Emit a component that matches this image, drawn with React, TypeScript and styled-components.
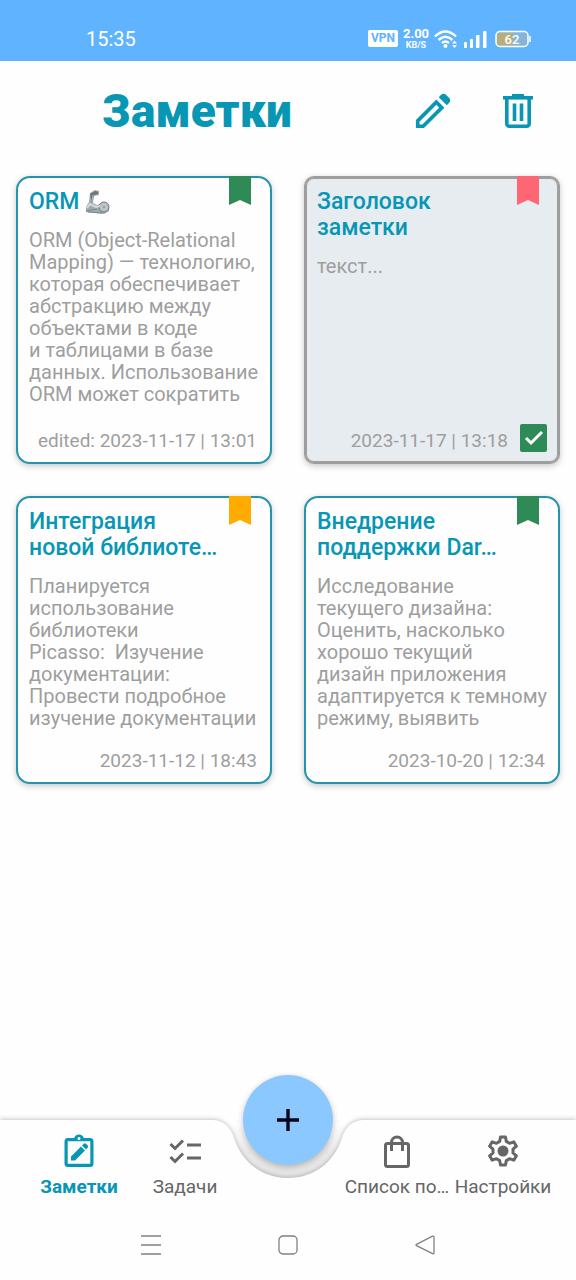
import React from 'react';
import styled, { createGlobalStyle } from 'styled-components';

const teal = '#0796b4';
const grey = '#9e9e9e';
const green = '#2e8b57';

const GlobalStyle = createGlobalStyle`
  * { box-sizing: border-box; }
  body {
    margin: 0;
    background: #fefefe;
    font-family: Roboto, "Liberation Sans", sans-serif;
  }
  button { padding: 0; border: 0; background: none; font: inherit; cursor: pointer; }
  svg { display: block; }
`;

const Screen = styled.div`
  min-height: 100vh;
  display: flex;
  flex-direction: column;
`;

const StatusBar = styled.div`
  display: flex;
  align-items: center;
  justify-content: space-between;
  height: 61px;
  padding: 16px 45px 0 86px;
  background: #60b3ff;
  color: #fff;
`;

const Clock = styled.time`
  font-size: 20px;
  line-height: 24px;
`;

const StatusIcons = styled.div`
  display: flex;
  align-items: center;
  gap: 4px;
`;

const VpnBadge = styled.span`
  width: 30px;
  border-radius: 2px;
  background: #fff;
  color: #60b3ff;
  font-size: 12px;
  font-weight: 700;
  line-height: 17px;
  text-align: center;
`;

const Speed = styled.span`
  display: flex;
  flex-direction: column;
  align-items: center;
  width: 28px;
  font-size: 13px;
  font-weight: 700;
  line-height: 13px;
`;

const SpeedUnit = styled.span`
  font-size: 9px;
  line-height: 11px;
`;

const Header = styled.header`
  display: flex;
  align-items: center;
  padding: 0 40px 0 102px;
  height: 100px;
  color: ${teal};
`;

const PageTitle = styled.h1`
  flex: 1;
  margin: 0;
  font-size: 46px;
  font-weight: 900;
  line-height: 48px;
`;

const HeaderActions = styled.div`
  display: flex;
  align-items: center;
  gap: 48px;
`;

const HeaderButton = styled.button`
  color: ${teal};
`;

const Notes = styled.main`
  flex: 1;
  display: grid;
  grid-template-columns: repeat(2, minmax(0, 1fr));
  align-content: start;
  gap: 32px;
  padding: 15px 16px 32px;
`;

const Card = styled.article<{ $selected?: boolean }>`
  position: relative;
  display: flex;
  flex-direction: column;
  height: 288px;
  padding: 11px 11px 10px;
  border: 2px solid ${(p) => (p.$selected ? grey : '#2593ac')};
  border-radius: ${(p) => (p.$selected ? 10 : 14)}px;
  background: ${(p) => (p.$selected ? '#e7ecf0' : '#fefefe')};
  box-shadow: ${(p) => (p.$selected ? `inset 0 0 0 1px ${grey}, ` : '')}0 2px 6px rgba(0, 0, 0, 0.22);
`;

const CardTitle = styled.h2`
  display: flex;
  gap: 5px;
  margin: 0 0 14px;
  color: ${teal};
  font-size: 23px;
  font-weight: 500;
  line-height: 26px;
  white-space: pre-line;
`;

const CardText = styled.p`
  flex: 1;
  margin: 0;
  color: ${grey};
  font-size: 20px;
  line-height: 22px;
  white-space: pre;
`;

const CardFooter = styled.footer`
  display: flex;
  align-items: flex-end;
  justify-content: flex-end;
  gap: 12px;
  height: 28px;
  padding-right: 2px;
  color: ${grey};
  font-size: 19px;
  line-height: 22px;
  white-space: nowrap;
`;

const Ribbon = styled.span<{ $color: string }>`
  position: absolute;
  top: -2px;
  right: 19px;
  width: 22px;
  height: 29px;
  background: ${(p) => p.$color};
  clip-path: polygon(0 0, 100% 0, 100% 100%, 50% 83%, 0 100%);
`;

const CheckLabel = styled.label`
  position: relative;
  width: 27px;
  height: 28px;
  margin-right: -2px;
  svg { position: absolute; inset: 0; pointer-events: none; }
`;

const CheckInput = styled.input`
  appearance: none;
  display: block;
  width: 27px;
  height: 28px;
  margin: 0;
  border-radius: 2px;
  background: ${green};
`;

const BottomBar = styled.nav`
  position: relative;
  padding: 0 20px 0 26px;
  height: 90px;
`;

const BarSurface = styled.div`
  position: absolute;
  inset: 0;
  display: flex;
  filter: drop-shadow(0 -1px 2px rgba(0, 0, 0, 0.22));
`;

const BarSide = styled.div`
  flex: 1;
  background: #fefefe;
`;

const CradleShade = styled.svg`
  position: absolute;
  top: 0;
  left: calc(50% - 80px);
`;

const Tabs = styled.div`
  position: relative;
  display: grid;
  grid-template-columns: repeat(5, minmax(0, 1fr));
`;

const Tab = styled.button<{ $active?: boolean }>`
  display: flex;
  flex-direction: column;
  align-items: center;
  gap: 8px;
  padding-top: 14px;
  color: ${(p) => (p.$active ? teal : '#666')};
  font-size: 19px;
  font-weight: ${(p) => (p.$active ? 700 : 400)};
  line-height: 22px;
  white-space: nowrap;
`;

const AddButton = styled.button`
  position: absolute;
  top: -45px;
  left: calc(50% - 45px);
  display: grid;
  place-items: center;
  width: 90px;
  height: 90px;
  border-radius: 50%;
  background: #8ac8ff;
  box-shadow: 0 2px 6px rgba(0, 0, 0, 0.24);
`;

const SystemBar = styled.div`
  position: relative;
  display: flex;
  justify-content: center;
  align-items: center;
  gap: 117px;
  height: 70px;
  background: #fefefe;
`;

const SystemButton = styled.button`
  display: grid;
  place-items: center;
  width: 20px;
  height: 20px;
  color: #808080;
`;

const MechArm = () => (
  <svg width="27" height="26" viewBox="0 0 27 26" role="img" aria-label="🦾">
    <path d="M2 18 L5 13 L6 4 L11 1 L15 2 L15 6 L10 7 L9 14 L13 16 L20 13 L25 16 L25 22 L20 25 L2 23Z" fill="#9eabb1" />
    <circle cx="20" cy="18" r="5" fill="#b9c3c7" stroke="#72797c" />
    <circle cx="20" cy="18" r="2" fill="#98a3a8" stroke="#c8cfd2" />
    <path d="M6 5 L11 2 L14 3 L14 5 L10 6 L8 14Z" fill="#6f7578" />
    <path d="M8 13 L9 6" stroke="#b4babd" strokeWidth="1" />
    <path d="M3 19 L6 15 L12 18 L16 17" stroke="#d4dadd" strokeWidth="2" fill="none" />
    <path d="M2 22 L13 20 M4 23 L18 24" stroke="#7b878d" fill="none" />
  </svg>
);

const Plus = () => (
  <svg width="24" height="24" viewBox="0 0 24 24" stroke="#05051a" strokeWidth="3.400">
    <path d="M12 1v22M1 12h22" />
  </svg>
);

type Note = {
  title: string;
  text: string;
  date: string;
  ribbon: string;
  arm?: boolean;
  selected?: boolean;
};

const notes: Note[] = [
  {
    title: 'ORM',
    arm: true,
    text: 'ORM (Object-Relational\nMapping) — технологию,\nкоторая обеспечивает\nабстракцию между\nобъектами в коде\nи таблицами в базе\nданных. Использование\nORM может сократить',
    date: 'edited: 2023-11-17 | 13:01',
    ribbon: green,
  },
  {
    title: 'Заголовок\nзаметки',
    text: 'текст...',
    date: '2023-11-17 | 13:18',
    ribbon: '#ff6673',
    selected: true,
  },
  {
    title: 'Интеграция\nновой библиоте…',
    text: 'Планируется\nиспользование\nбиблиотеки\nPicasso:  Изучение\nдокументации:\nПровести подробное\nизучение документации',
    date: '2023-11-12 | 18:43',
    ribbon: '#ffab00',
  },
  {
    title: 'Внедрение\nподдержки Dar…',
    text: 'Исследование\nтекущего дизайна:\nОценить, насколько\nхорошо текущий\nдизайн приложения\nадаптируется к темному\nрежиму, выявить',
    date: '2023-10-20 | 12:34',
    ribbon: green,
  },
];

const NoteCard = ({ note }: { note: Note }) => (
  <Card $selected={note.selected}>
    <Ribbon $color={note.ribbon} />
    <CardTitle>
      {note.title}
      {note.arm && <MechArm />}
    </CardTitle>
    <CardText>{note.text}</CardText>
    <CardFooter>
      <time>{note.date}</time>
      {note.selected && (
        <CheckLabel>
          <CheckInput type="checkbox" defaultChecked aria-label="Выбрать заметку" />
          <svg width="27" height="28" viewBox="0 0 27 28" fill="none" stroke="#fff" strokeWidth="3">
            <path d="M6 14l5 5L22 8" />
          </svg>
        </CheckLabel>
      )}
    </CardFooter>
  </Card>
);

export default function App() {
  return (
    <>
      <GlobalStyle />
      <Screen>
        <StatusBar>
          <Clock>15:35</Clock>
          <StatusIcons>
            <VpnBadge>VPN</VpnBadge>
            <Speed>
              <span>2.00</span>
              <SpeedUnit>KB/S</SpeedUnit>
            </Speed>
            <svg width="25" height="20" viewBox="0 0 25 20" fill="none" stroke="#fff" strokeWidth="2.4">
              <path d="M1 7.500Q11.500-2.500 22 7.500M4.500 11Q11.500 4.500 18.500 11M8 14.200Q11.500 11 15 14.200" />
              <circle cx="11.500" cy="17" r="2" fill="#fff" stroke="none" />
              <path d="M18 14.500l2.500-3 2.500 3zM18 16l2.500 3 2.500-3z" fill="#fff" stroke="none" />
            </svg>
            <svg width="25" height="18" viewBox="0 0 25 18" fill="#fff">
              <rect x="1" y="12" width="3" height="6" rx="1" />
              <rect x="7" y="9" width="3" height="9" rx="1" />
              <rect x="13" y="5" width="3.500" height="13" rx="1" />
              <rect x="20" y="1" width="3.500" height="17" rx="1" />
            </svg>
            <svg width="39" height="18" viewBox="0 0 39 18">
              <rect x="4" y="1.500" width="32" height="15" rx="4" fill="#86b5d8" stroke="#fff" strokeWidth="1.500" />
              <path d="M7 3h14v12H7a2 2 0 0 1-2-2V5a2 2 0 0 1 2-2z" fill="#b9ae78" />
              <path d="M38 6v6" stroke="#fff" strokeWidth="1.500" />
              <text x="20" y="14" fill="#fff" fontSize="13" fontWeight="500" textAnchor="middle">62</text>
            </svg>
          </StatusIcons>
        </StatusBar>

        <Header>
          <PageTitle>Заметки</PageTitle>
          <HeaderActions>
            <HeaderButton aria-label="Редактировать">
              <svg width="38" height="38" viewBox="0 0 40 40" fill="currentColor">
                <path
                  fillRule="evenodd"
                  d="M2 38v-8.500L23.500 8l8.500 8.500L10.500 38zM5.800 34.200h3L26.500 16.500l-3-3L5.800 31.200z"
                />
                <path d="M26 5.500l2.300-2.300a4 4 0 0 1 5.600 0l2.900 2.900a4 4 0 0 1 0 5.600L34.500 14z" />
              </svg>
            </HeaderButton>
            <HeaderButton aria-label="Удалить">
              <svg width="36" height="40" viewBox="0 0 36 40" fill="none" stroke="currentColor">
                <path d="M3 6.800h30" strokeWidth="3.600" />
                <path d="M12 4.500h12" strokeWidth="3" />
                <path d="M6.800 8v24.700a2.500 2.500 0 0 0 2.500 2.500h17.400a2.500 2.500 0 0 0 2.500-2.500V8" strokeWidth="3.600" />
                <path d="M14.500 12.500v17.500M21.500 12.500v17.500" strokeWidth="3.600" />
              </svg>
            </HeaderButton>
          </HeaderActions>
        </Header>

        <Notes>
          {notes.map((note) => (
            <NoteCard key={note.title} note={note} />
          ))}
        </Notes>

        <BottomBar>
          <BarSurface>
            <BarSide />
            <svg width="160" height="90" viewBox="0 0 160 90">
              <path d="M0 0H4C16 0 23 8 26 18C34 43 55 58 80 58S126 43 134 18C137 8 144 0 156 0H160V90H0Z" fill="#fefefe" />
            </svg>
            <BarSide />
          </BarSurface>
          <CradleShade width="160" height="60" viewBox="0 0 160 60">
            <defs>
              <linearGradient id="cradle" gradientUnits="userSpaceOnUse" x1="0" y1="4" x2="0" y2="58">
                <stop offset="0" stopColor="#000" stopOpacity="0" />
                <stop offset="0.500" stopColor="#000" stopOpacity="0.080" />
                <stop offset="1" stopColor="#000" stopOpacity="0.100" />
              </linearGradient>
            </defs>
            <path d="M4 0C16 0 23 8 26 18C34 43 55 58 80 58S126 43 134 18C137 8 144 0 156 0Z" fill="url(#cradle)" />
          </CradleShade>
          <Tabs>
            <Tab $active>
              <svg width="32" height="34" viewBox="0 0 32 34" fill="currentColor">
                <path
                  fillRule="evenodd"
                  d="M5 4h6.200a5 5 0 0 1 9.600 0H27a3.500 3.500 0 0 1 3.500 3.500v22A3.500 3.500 0 0 1 27 33H5a3.500 3.500 0 0 1-3.500-3.500v-22A3.500 3.500 0 0 1 5 4zM4.700 7.200v22.600h22.600V7.200zM16 3a1.500 1.500 0 1 0 0 3 1.500 1.500 0 0 0 0-3z"
                />
                <path d="M8 26.500v-4L18 12.500l4 4-10 10zM19 11.500l2-2q1-.6 2 .2l1.800 1.800q.8 1 0 2L23 15.500z" />
              </svg>
              Заметки
            </Tab>
            <Tab>
              <svg width="34" height="34" viewBox="0 0 34 34" fill="none" stroke="currentColor" strokeWidth="3">
                <path d="M2.500 10l4.500 4.500 8-8M2.500 23l4.500 4.500 8-8M19 11h14M19 24h14" />
              </svg>
              Задачи
            </Tab>
            <span />
            <Tab>
              <svg width="32" height="34" viewBox="0 0 32 34" fill="none" stroke="currentColor" strokeWidth="3">
                <rect x="4.500" y="9.500" width="23" height="23" rx="2" />
                <path d="M10.500 17V8.500a5.500 5.500 0 0 1 11 0V17" />
              </svg>
              Список по…
            </Tab>
            <Tab>
              <svg width="34" height="34" viewBox="0 0 34 34" fill="none" stroke="currentColor" strokeWidth="3" strokeLinejoin="round">
                <path d="M14.500 3h5l.8 4.400 3.200 1.900 4.300-1.500 2.600 4.400-3.400 2.900v3.800l3.400 2.900-2.600 4.400-4.300-1.500-3.200 1.900-.8 4.400h-5l-.8-4.400-3.200-1.900-4.300 1.500-2.600-4.400 3.400-2.900v-3.800l-3.400-2.900 2.600-4.400 4.300 1.500 3.200-1.900z" />
                <circle cx="17" cy="17" r="5.500" fill="currentColor" stroke="none" />
              </svg>
              Настройки
            </Tab>
          </Tabs>
          <AddButton aria-label="Добавить заметку">
            <Plus />
          </AddButton>
        </BottomBar>

        <SystemBar>
          <SystemButton aria-label="Меню">
            <svg width="20" height="20" viewBox="0 0 20 20" stroke="currentColor" strokeWidth="1.400">
              <path d="M0 1h20M0 10h20M0 19h20" />
            </svg>
          </SystemButton>
          <SystemButton aria-label="Домой">
            <svg width="20" height="20" viewBox="0 0 20 20" fill="none" stroke="currentColor" strokeWidth="1.300">
              <rect x="1" y="1" width="18" height="18" rx="4" />
            </svg>
          </SystemButton>
          <SystemButton aria-label="Назад">
            <svg width="20" height="20" viewBox="0 0 20 20" fill="none" stroke="currentColor" strokeWidth="1.300" strokeLinejoin="round">
              <path d="M1.500 9.300L17.500 1.200Q19 1 19 2.200v15.600Q19 19 17.500 18.700L1.500 10.600Q.5 10 1.500 9.300z" />
            </svg>
          </SystemButton>
        </SystemBar>
      </Screen>
    </>
  );
}
